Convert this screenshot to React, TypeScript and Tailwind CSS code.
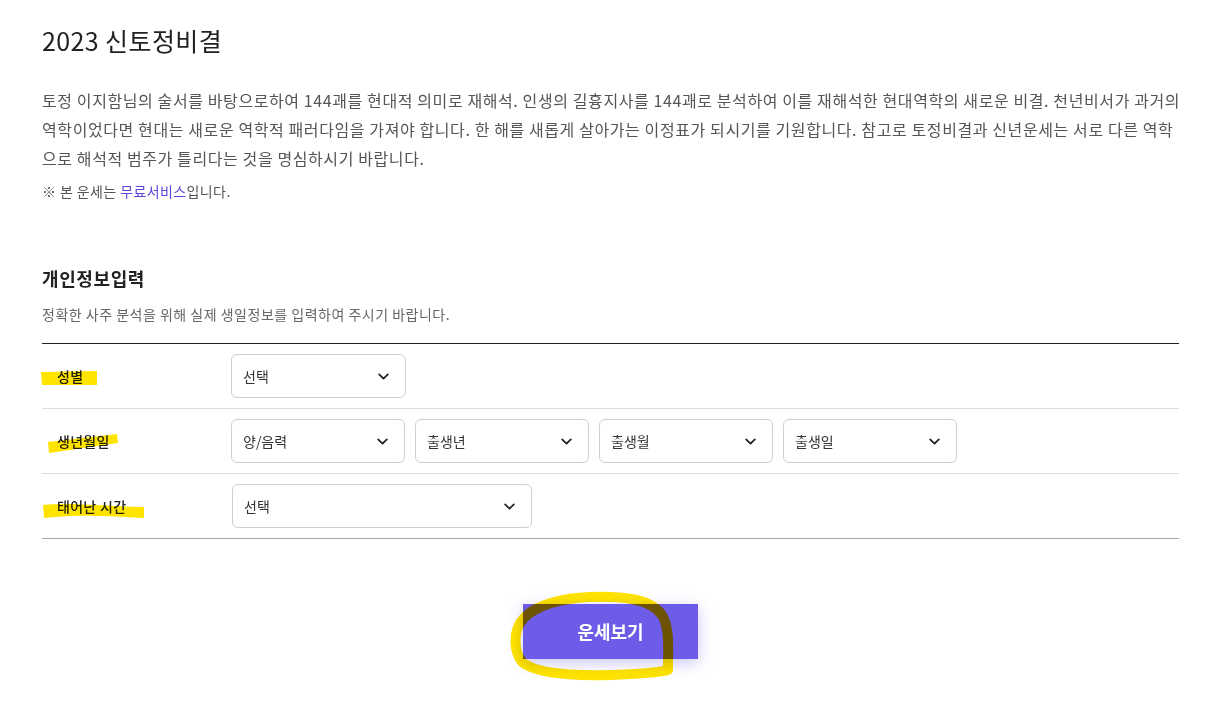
import React from "react";

const font = { fontFamily: '"Noto Sans CJK KR", "Noto Sans", sans-serif' };

function Chevron() {
  return (
    <svg width="15" height="15" viewBox="0 0 24 24" fill="none" stroke="#222" strokeWidth="2.8" strokeLinecap="round" strokeLinejoin="round">
      <path d="M5 8.5l7 7 7-7" />
    </svg>
  );
}

function Select({ label, w }: { label: string; w: string }) {
  return (
    <div className={`${w} h-[44px] border border-[#cfcfcf] rounded-[6px] flex items-center justify-between pl-[11px] pr-[14px] text-[14px] text-[#333] bg-white`}>
      <span>{label}</span>
      <Chevron />
    </div>
  );
}

function Row({ label, children, last }: { label: string; children: React.ReactNode; last?: boolean }) {
  return (
    <div className={`h-[65px] flex items-center border-b ${last ? "border-[#a8a8a8]" : "border-[#dcdcdc]"}`}>
      <div className="w-[189px] pl-[15px] text-[14px] font-medium text-[#222] tracking-[0.3px]">{label}</div>
      <div className="flex gap-[10px]">{children}</div>
    </div>
  );
}

export default function App() {
  return (
    <div className="relative w-[1213px] h-[705px] bg-white overflow-hidden" style={font}>
      <div className="ml-[42px] w-[1137px]">
        <h1 className="pt-[24px] text-[25px] leading-[32px] text-[#222] font-normal tracking-[0.4px]">2023 신토정비결</h1>
        <div className="mt-[30px] text-[16px] leading-[29px] text-[#555] tracking-[0.6px] whitespace-nowrap">
          <p>토정 이지함님의 술서를 바탕으로하여 144괘를 현대적 의미로 재해석. 인생의 길흉지사를 144괘로 분석하여 이를 재해석한 현대역학의 새로운 비결. 천년비서가 과거의</p>
          <p>역학이었다면 현대는 새로운 역학적 패러다임을 가져야 합니다. 한 해를 새롭게 살아가는 이정표가 되시기를 기원합니다. 참고로 토정비결과 신년운세는 서로 다른 역학</p>
          <p>으로 해석적 범주가 틀리다는 것을 명심하시기 바랍니다.</p>
        </div>
        <p className="mt-[8px] text-[14px] leading-[20px] text-[#555] tracking-[0.4px]">
          ※ 본 운세는 <span className="text-[#5b45d6]">무료서비스</span>입니다.
        </p>
        <h2 className="mt-[65px] text-[18px] leading-[24px] font-bold text-[#222] tracking-[0.6px]">개인정보입력</h2>
        <p className="mt-[14px] text-[14px] leading-[20px] text-[#666] tracking-[0.5px]">정확한 사주 분석을 위해 실제 생일정보를 입력하여 주시기 바랍니다.</p>
        <div className="mt-[19px] border-t border-[#222]">
          <Row label="성별">
            <Select label="선택" w="w-[175px]" />
          </Row>
          <Row label="생년월일">
            <Select label="양/음력" w="w-[174px]" />
            <Select label="출생년" w="w-[174px]" />
            <Select label="출생월" w="w-[174px]" />
            <Select label="출생일" w="w-[174px]" />
          </Row>
          <Row label="태어난 시간" last>
            <div className="ml-[1px]">
              <Select label="선택" w="w-[300px]" />
            </div>
          </Row>
        </div>
        <div className="mt-[65px] flex justify-center">
          <button className="w-[175px] h-[55px] bg-[#6d5ce8] text-white text-[18px] font-bold shadow-[0_4px_14px_rgba(109,92,232,0.35)]">
            운세보기
          </button>
        </div>
      </div>
      <svg className="absolute inset-0 pointer-events-none mix-blend-multiply" width="1213" height="705" viewBox="0 0 1213 705">
        <path d="M41 372 L97 371 L97 385 L42 385 Z" fill="#ffe400" />
        <path d="M48 442 L117 434 L118 443 L49 453 Z" fill="#ffe400" />
        <path d="M43 505 C70 502 100 506 144 507 L144 518 C110 516 80 514 44 518 Z" fill="#ffe400" />
        <path
          d="M668 668 C668 650 670 628 662 615 C650 598 620 596 590 597 C560 598 535 606 524 618 C512 630 514 652 522 662 C535 673 570 676 610 675 C640 674 660 672 668 670"
          fill="none"
          stroke="#ffe400"
          strokeWidth="10"
          strokeLinecap="round"
          strokeLinejoin="round"
        />
      </svg>
    </div>
  );
}
